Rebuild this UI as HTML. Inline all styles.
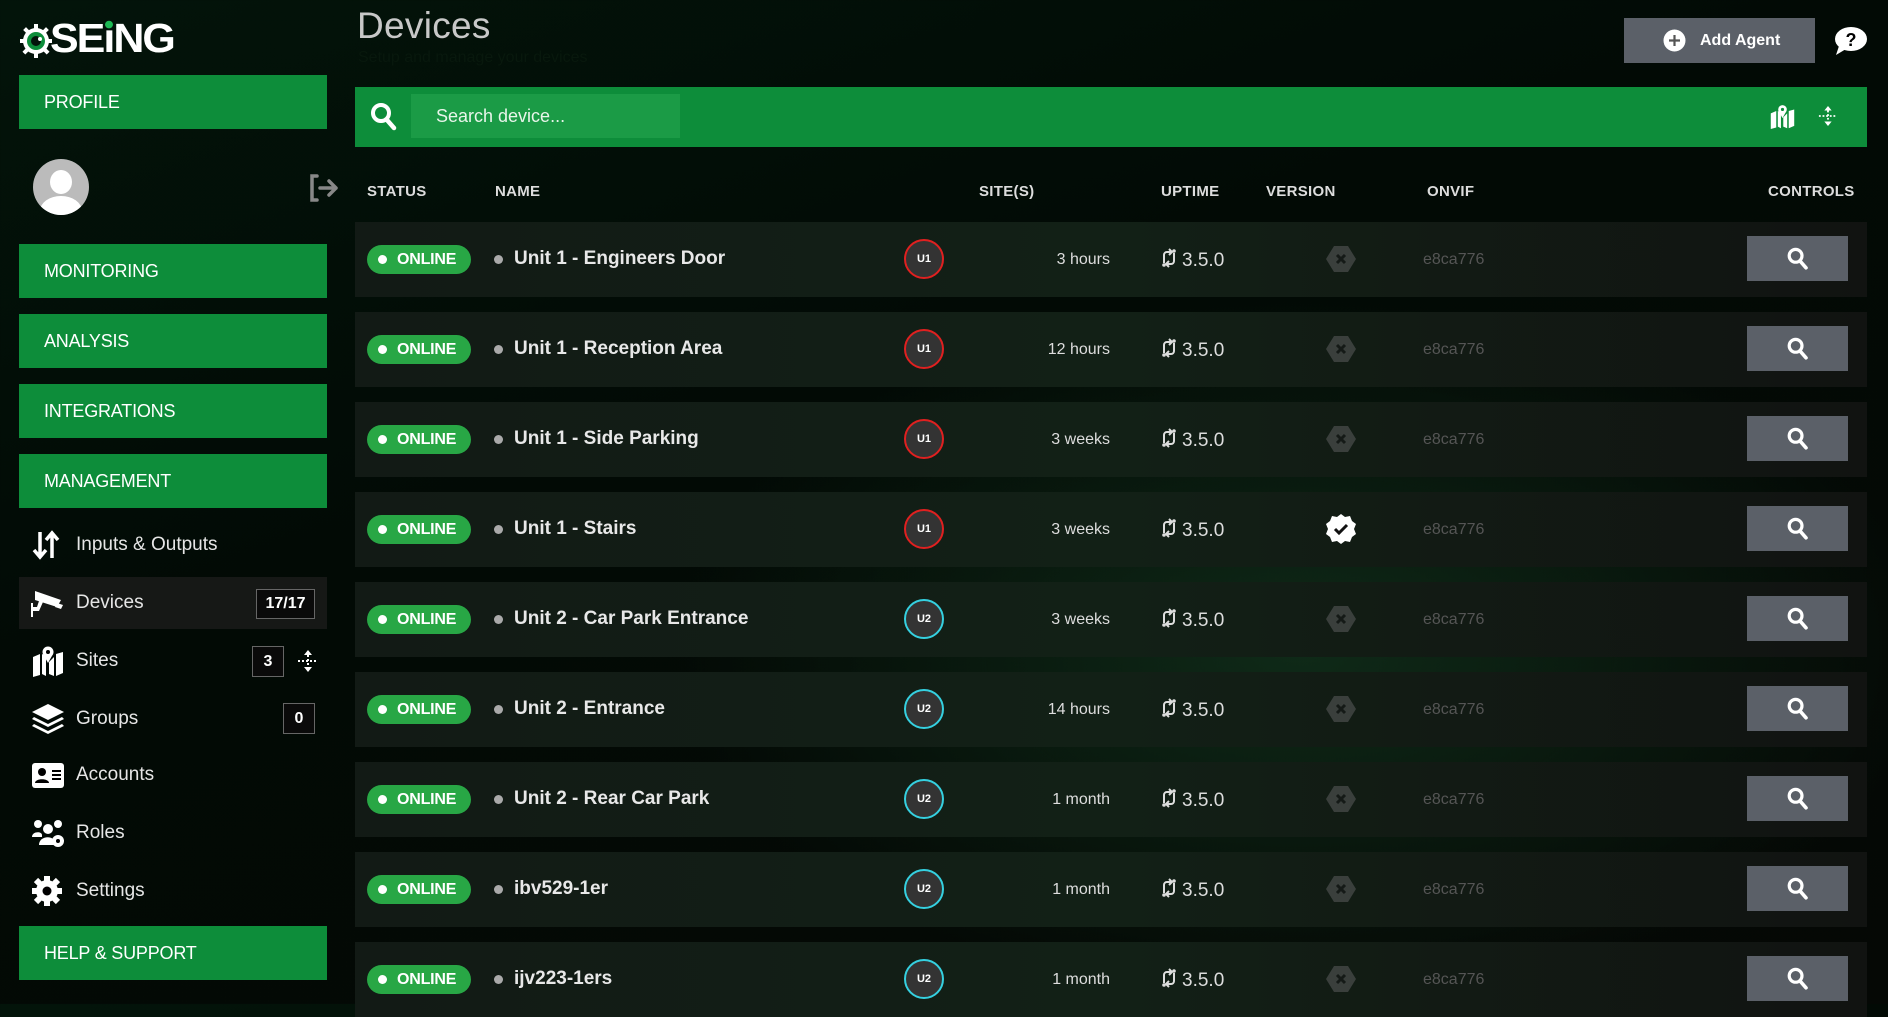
<!DOCTYPE html>
<html><head><meta charset="utf-8"><style>
*{margin:0;padding:0;box-sizing:border-box}
body{width:1888px;height:1004px;overflow:hidden;font-family:"Liberation Sans",sans-serif;color:#fff;position:relative;
background:radial-gradient(ellipse 900px 500px at 1300px 650px,#0f2a18 0%,rgba(10,25,15,0) 70%),linear-gradient(160deg,#03140a 0%,#020a05 40%,#050805 100%);}
.a{position:absolute}
.gbtn{position:absolute;left:19px;width:308px;height:54px;background:#0d8d3a;font-size:18px;line-height:54px;padding-left:25px;letter-spacing:-0.2px}
.mi{position:absolute;left:19px;width:308px;height:52px;font-size:19px;line-height:52px;padding-left:57px;color:#e6e6e6}
.mi svg{position:absolute;left:12px;top:10px}
.badge{position:absolute;border:1px solid #666;background:#0a0a0a;font-size:16px;text-align:center;font-weight:bold}
.th{position:absolute;top:183px;font-size:15px;font-weight:bold;color:#ddd;letter-spacing:0.3px}
.row{position:absolute;left:355px;width:1512px;height:75px;background:linear-gradient(90deg,#121a15,#122016 50%,#111311)}
.pill{position:absolute;left:12px;top:23px;width:104px;height:29px;border-radius:15px;background:#28a745;font-size:16px;line-height:29px;padding-left:30px;font-weight:bold;letter-spacing:-0.2px}
.pill:before{content:"";position:absolute;left:11px;top:10px;width:9px;height:9px;border-radius:50%;background:#fff}
.dot{position:absolute;left:139px;top:33px;width:9px;height:9px;border-radius:50%;background:#aaa}
.nm{position:absolute;left:159px;top:26px;font-size:19px;font-weight:bold;color:#e8e8e8}
.u{position:absolute;left:549px;top:17px;width:40px;height:40px;border-radius:50%;background:#333;border:2px solid #e02020;font-size:11px;font-weight:bold;text-align:center;line-height:36px}
.u.c{border-color:#35d0e0}
.up{position:absolute;right:757px;top:29px;font-size:16px;color:#ddd}
.ver{position:absolute;left:805px;top:26px;font-size:19px;color:#ddd}
.ver svg{vertical-align:-2px;margin-right:4px}
.hx{position:absolute;left:970px;top:21px}
.on{position:absolute;left:1068px;top:29px;font-size:16px;color:#555}
.sb{position:absolute;left:1392px;top:14px;width:101px;height:45px;background:#5b6068}
.sb svg{position:absolute;left:39px;top:11px}
</style></head><body>
<div class="a" style="left:19px;top:22px;">
<svg width="34" height="36" viewBox="0 0 34 36"><g fill="#fff"><circle cx="17" cy="19" r="13"/><rect x="15" y="2" width="4" height="5"/><rect x="15" y="31" width="4" height="5"/><rect x="1" y="17" width="5" height="4"/><rect x="28" y="17" width="5" height="4"/><rect x="5" y="6" width="4" height="5" transform="rotate(-45 7 8)"/><rect x="25" y="6" width="4" height="5" transform="rotate(45 27 8)"/><rect x="5" y="27" width="4" height="5" transform="rotate(45 7 29)"/><rect x="25" y="27" width="4" height="5" transform="rotate(-45 27 29)"/></g><circle cx="17" cy="19" r="9" fill="#0d8d3a"/><circle cx="17" cy="19" r="5" fill="#03140a"/><circle cx="21" cy="17" r="2" fill="#fff"/></svg>
</div>
<div class="a" style="left:50px;top:16px;font-size:43px;font-weight:900;letter-spacing:-2px;transform:scaleY(0.95);transform-origin:top left;"><b>SE<span style="position:relative">ı<span style="position:absolute;left:2px;top:5px;width:8px;height:8px;border-radius:50%;background:#1db954"></span></span>NG</b></div>

<div class="gbtn" style="top:75px">PROFILE</div>
<div class="a" style="left:33px;top:159px;width:56px;height:56px;border-radius:50%;background:#bbb;overflow:hidden">
<div class="a" style="left:17px;top:11px;width:22px;height:24px;border-radius:50%;background:#fff"></div>
<div class="a" style="left:7px;top:37px;width:42px;height:30px;border-radius:50%;background:#fff"></div></div>
<svg class="a" style="left:307px;top:173px" width="34" height="30" viewBox="0 0 34 30"><path d="M10 3H5v24h5" stroke="#888" stroke-width="3.5" fill="none" stroke-linecap="round"/><path d="M13 15h16M22 8l7 7-7 7" stroke="#888" stroke-width="3.5" fill="none" stroke-linecap="round" stroke-linejoin="round"/></svg>
<div class="gbtn" style="top:244px">MONITORING</div>
<div class="gbtn" style="top:314px">ANALYSIS</div>
<div class="gbtn" style="top:384px">INTEGRATIONS</div>
<div class="gbtn" style="top:454px">MANAGEMENT</div>

<div class="mi" style="top:519px"><svg width="30" height="32" viewBox="0 0 30 32"><path d="M9 3v24M3 21l6 7 6-7M21 29V5M15 11l6-7 6 7" stroke="#fff" stroke-width="3.5" fill="none"/></svg>Inputs &amp; Outputs</div>
<div class="mi" style="top:577px;background:#161816"><svg width="34" height="32" viewBox="0 0 34 32"><path d="M4 4l26 9-4 7-22-7z" fill="#fff"/><path d="M24 20l6 2 2-4-6-2z" fill="#fff"/><path d="M8 14l-2 6H2v-4H0v14h2v-6h6l4-9z" fill="#fff"/></svg>Devices</div>
<div class="badge" style="left:256px;top:589px;width:59px;height:30px;line-height:28px">17/17</div>
<div class="mi" style="top:635px"><svg width="34" height="32" viewBox="0 0 34 32"><path d="M2 12l7-3v21l-7 2zM25 9l7-2v21l-7 3zM11 9l4 2v20l-4-2zM18 17l5-5v19l-5-2z" fill="#fff"/><circle cx="17" cy="7" r="5.5" fill="#fff"/><circle cx="17" cy="7" r="2" fill="#000"/><path d="M12 9l5 9 5-9z" fill="#fff"/></svg>Sites</div>
<div class="badge" style="left:252px;top:646px;width:32px;height:31px;line-height:29px">3</div>
<svg class="a" style="left:297px;top:649px" width="22" height="24" viewBox="0 0 22 24"><path d="M11 1l-4 5h8zM11 23l-4-5h8z" fill="#fff"/><path d="M11 6v12M1 12h20" stroke="#fff" stroke-width="2" stroke-dasharray="2 2"/></svg>
<div class="mi" style="top:693px"><svg width="34" height="32" viewBox="0 0 34 32"><path d="M17 1l16 8-16 8-16-8z" fill="#fff"/><path d="M3 14l14 7 14-7 2 2-16 8-16-8zM3 21l14 7 14-7 2 2-16 8-16-8z" fill="#fff"/></svg>Groups</div>
<div class="badge" style="left:283px;top:703px;width:32px;height:31px;line-height:29px">0</div>
<div class="mi" style="top:749px"><svg width="34" height="32" viewBox="0 0 34 32"><rect x="1" y="4" width="32" height="25" rx="3" fill="#fff"/><circle cx="11" cy="13" r="4" fill="#000"/><path d="M4 24c0-5 14-5 14 0z" fill="#000"/><path d="M21 12h9M21 16h9M21 20h9" stroke="#000" stroke-width="2"/></svg>Accounts</div>
<div class="mi" style="top:807px"><svg width="34" height="32" viewBox="0 0 34 32"><circle cx="7" cy="7" r="4" fill="#fff"/><circle cx="27" cy="7" r="4" fill="#fff"/><circle cx="17" cy="12" r="5" fill="#fff"/><path d="M1 20c0-6 10-6 10-2v2zM8 28c0-10 16-10 16-2v2z" fill="#fff"/><circle cx="27" cy="24" r="6" fill="#fff"/><circle cx="27" cy="24" r="2" fill="#000"/></svg>Roles</div>
<div class="mi" style="top:865px"><svg width="32" height="32" viewBox="0 0 32 32"><circle cx="16" cy="16" r="11" fill="#fff"/><g stroke="#fff" stroke-width="6"><path d="M16 1v30M1 16h30M5 5l22 22M27 5L5 27"/></g><circle cx="16" cy="16" r="4.5" fill="#000"/></svg>Settings</div>
<div class="gbtn" style="top:926px">HELP &amp; SUPPORT</div>

<div class="a" style="left:357px;top:5px;font-size:37px;color:#c8c8c8;letter-spacing:0.3px">Devices</div>
<div class="a" style="left:358px;top:49px;font-size:16px;color:#08180d">Setup and manage your devices</div>
<div class="a" style="left:1624px;top:18px;width:191px;height:45px;background:#5b6068;font-size:16px;font-weight:bold;line-height:45px;padding-left:76px">Add Agent</div>
<svg class="a" style="left:1663px;top:29px" width="23" height="23" viewBox="0 0 23 23"><circle cx="11.5" cy="11.5" r="11" fill="#fff"/><path d="M11.5 6v11M6 11.5h11" stroke="#555" stroke-width="2.2"/></svg>
<svg class="a" style="left:1834px;top:26px" width="34" height="30" viewBox="0 0 34 30"><ellipse cx="17" cy="13" rx="16" ry="12" fill="#fff"/><path d="M5 20l-3 9 10-6z" fill="#fff"/><text x="17" y="20" text-anchor="middle" font-size="18" font-weight="bold" fill="#000" font-family="Liberation Sans">?</text></svg>

<div class="a" style="left:355px;top:87px;width:1512px;height:60px;background:#0d8d3a"></div>
<svg class="a" style="left:370px;top:102px" width="28" height="30" viewBox="0 0 28 30"><circle cx="11" cy="11" r="8" stroke="#fff" stroke-width="4" fill="none"/><path d="M17 18l7 8" stroke="#fff" stroke-width="4.5" stroke-linecap="round"/></svg>
<div class="a" style="left:411px;top:94px;width:269px;height:44px;background:#1b9b46;font-size:18px;line-height:44px;padding-left:25px;color:#e8f5ea">Search device...</div>
<svg class="a" style="left:1769px;top:104px" width="27" height="25" viewBox="0 0 34 32"><path d="M2 12l7-3v21l-7 2zM25 9l7-2v21l-7 3zM11 9l4 2v20l-4-2zM18 17l5-5v19l-5-2z" fill="#fff"/><circle cx="17" cy="7" r="5.5" fill="#fff"/><circle cx="17" cy="7" r="2" fill="#0d8d3a"/><path d="M12 9l5 9 5-9z" fill="#fff"/></svg>
<svg class="a" style="left:1818px;top:105px" width="20" height="22" viewBox="0 0 22 24"><path d="M11 1l-4 5h8zM11 23l-4-5h8z" fill="#fff"/><path d="M11 6v12M1 12h20" stroke="#fff" stroke-width="2" stroke-dasharray="2 2"/></svg>

<div class="th" style="left:367px">STATUS</div>
<div class="th" style="left:495px">NAME</div>
<div class="th" style="left:979px">SITE(S)</div>
<div class="th" style="left:1161px">UPTIME</div>
<div class="th" style="left:1266px">VERSION</div>
<div class="th" style="left:1427px">ONVIF</div>
<div class="th" style="left:1768px">CONTROLS</div>

<div id="rows"></div>
<script>
var d=[["Unit 1 - Engineers Door","U1","3 hours",0],["Unit 1 - Reception Area","U1","12 hours",0],["Unit 1 - Side Parking","U1","3 weeks",0],["Unit 1 - Stairs","U1","3 weeks",1],["Unit 2 - Car Park Entrance","U2","3 weeks",0],["Unit 2 - Entrance","U2","14 hours",0],["Unit 2 - Rear Car Park","U2","1 month",0],["ibv529-1er","U2","1 month",0],["ijv223-1ers","U2","1 month",0]];
var sync='<svg width="18" height="20" viewBox="0 0 18 20"><path d="M4 15V7a3 3 0 0 1 3-3h4M9 1l3 3-3 3M14 5v8a3 3 0 0 1-3 3H7M9 19l-3-3 3-3" stroke="#ddd" stroke-width="2" fill="none"/><circle cx="4" cy="17" r="1.8" fill="#ddd"/><circle cx="14" cy="3" r="1.8" fill="#ddd"/></svg>';
var x='<svg width="32" height="32" viewBox="0 0 32 32"><path d="M9 3h14l8 13-8 13H9L1 16z" fill="#3a3f3c"/><path d="M12 12l8 8M20 12l-8 8" stroke="#151a17" stroke-width="3"/></svg>';
var ck='<svg width="32" height="32" viewBox="0 0 32 32"><path d="M16 1l4 3 5-1 2 5 4 3-2 5 2 5-4 3-2 5-5-1-4 3-4-3-5 1-2-5-4-3 2-5-2-5 4-3 2-5 5 1z" fill="#fff"/><path d="M10 16l4 4 8-8" stroke="#111" stroke-width="3" fill="none"/></svg>';
var s='<svg width="24" height="24" viewBox="0 0 28 30"><circle cx="11" cy="11" r="8" stroke="#fff" stroke-width="4" fill="none"/><path d="M17 18l7 8" stroke="#fff" stroke-width="4.5" stroke-linecap="round"/></svg>';
var h='';
d.forEach(function(r,i){h+='<div class="row" style="top:'+(222+90*i)+'px"><div class="pill">ONLINE</div><div class="dot"></div><div class="nm">'+r[0]+'</div><div class="u'+(r[1]=="U2"?" c":"")+'">'+r[1]+'</div><div class="up">'+r[2]+'</div><div class="ver">'+sync+'3.5.0</div><div class="hx">'+(r[3]?ck:x)+'</div><div class="on">e8ca776</div><div class="sb">'+s+'</div></div>';});
document.getElementById('rows').innerHTML=h;
</script>
</body></html>
